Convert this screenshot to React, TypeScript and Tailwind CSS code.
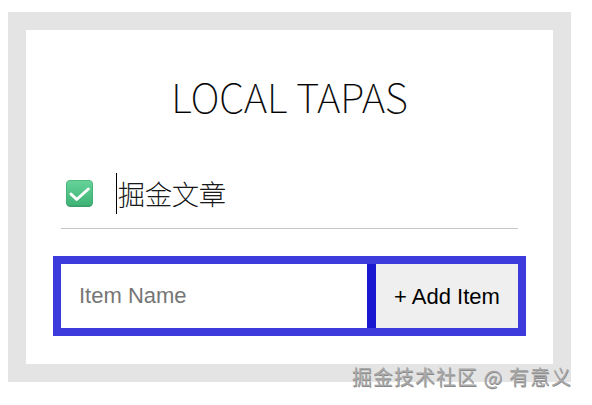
import React from "react";

function CheckIcon() {
  return (
    <svg width="27" height="27" viewBox="0 0 27 27" className="shrink-0">
      <defs>
        <linearGradient id="g" x1="0" y1="0" x2="0" y2="1">
          <stop offset="0" stopColor="#66d39a" />
          <stop offset="1" stopColor="#3fb376" />
        </linearGradient>
      </defs>
      <rect x="0" y="0" width="27" height="27" rx="4.5" fill="#3a9f69" />
      <rect x="0.5" y="0.5" width="26" height="25" rx="4" fill="url(#g)" />
      <path d="M5 14 L10.7 19.5 L22.3 9" fill="none" stroke="#ffffff" strokeWidth="3" strokeLinecap="round" strokeLinejoin="round" />
    </svg>
  );
}

export default function App() {
  return (
    <div className="relative w-[592px] h-[405px] bg-white overflow-hidden">
      <div className="ml-[8px] mt-[12px] w-[563px] h-[370px] bg-[#e4e4e4] p-[18px]">
        <div className="h-full bg-white px-[27px] flex flex-col">
          <h1
            className="mt-[46px] text-center text-[40px] leading-[40px] font-thin text-black [-webkit-text-stroke:0.2px_black]"
            style={{ fontFamily: '"Noto Sans CJK SC Thin", "Noto Sans CJK SC Light", Lato, sans-serif' }}
          >
            LOCAL TAPAS
          </h1>
          <div className="mt-[42px] mx-[8px] h-[71px] border-b border-[#c6c6c6] flex items-center pl-[5px]">
            <CheckIcon />
            <span className="ml-[23px] w-px h-[41px] bg-black" />
            <span
              className="ml-px text-[27px] leading-none font-thin text-black [-webkit-text-stroke:0.3px_black]"
              style={{ fontFamily: '"Noto Sans CJK SC Thin", "Noto Sans CJK SC Light", "Noto Sans CJK SC", sans-serif' }}
            >
              掘金文章
            </span>
          </div>
          <div
            className="mt-[27px] flex h-[80px] border-8 border-[#3d3bdb]"
            style={{ fontFamily: '"Liberation Sans", Arial, sans-serif' }}
          >
            <input
              className="flex-1 min-w-0 h-full bg-white pl-[18px] text-[22px] text-black placeholder:text-[#767676] outline-none border-r-[9px] border-[#1a17d1]"
              placeholder="Item Name"
            />
            <button className="w-[142px] h-full bg-[#efefef] text-[22px] text-black flex items-center justify-center">
              + Add Item
            </button>
          </div>
        </div>
      </div>
      <div
        className="absolute left-[352px] top-[365px] text-[20px] leading-[24px] tracking-[1px] text-[#a8a8a8] whitespace-nowrap"
        style={{
          fontFamily: '"Noto Sans CJK SC", sans-serif',
          textShadow: "0.5px 0.5px 0 #8a8a8a",
        }}
      >
        掘金技术社区 @ 有意义
      </div>
    </div>
  );
}
